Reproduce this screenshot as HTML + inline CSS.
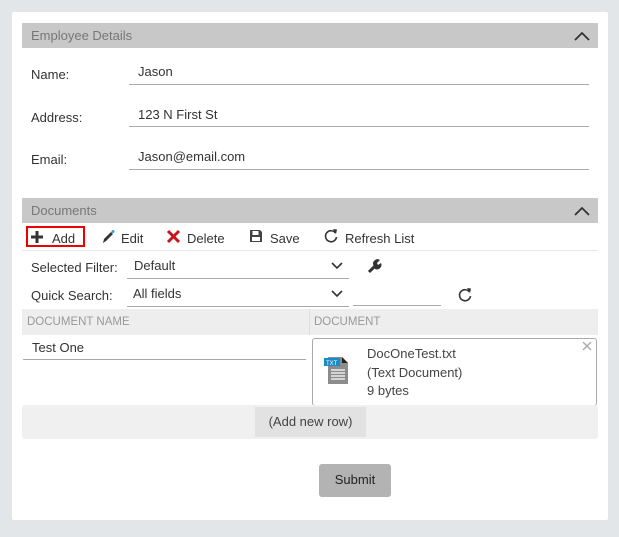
<!DOCTYPE html><html><head><style>
body{margin:0;width:619px;height:537px;background:#e2e6e9;font-family:"Liberation Sans",sans-serif;position:relative;overflow:hidden;color:#333}
.card{position:absolute;left:12px;top:12px;width:596px;height:508px;background:#fff;border-radius:2px}
.a{position:absolute}
.hdr{position:absolute;left:22px;width:576px;height:25px;background:#c8c8c8;color:#777;font-size:13px;line-height:25px;text-indent:9px}
.hdr svg{position:absolute;right:8px;top:8px}
.lbl{font-size:13px;color:#333}
.in{border-bottom:1px solid #aaa;font-size:13px;color:#333}
.t{font-size:13px;color:#333;position:absolute}
</style></head><body><div class="card"></div>
<div class="hdr" style="top:23px">Employee Details<svg width="16" height="10"><path d="M1 9L8 2L15 9" fill="none" stroke="#333" stroke-width="1.8"/></svg></div>
<div class="a lbl" style="left:31px;top:67px">Name:</div>
<div class="a in" style="left:129px;top:64px;width:460px;height:20px;text-indent:9px">Jason</div>
<div class="a lbl" style="left:31px;top:110px">Address:</div>
<div class="a in" style="left:129px;top:107px;width:460px;height:19px;text-indent:9px">123 N First St</div>
<div class="a lbl" style="left:31px;top:152px">Email:</div>
<div class="a in" style="left:129px;top:149px;width:460px;height:20px;text-indent:9px">Jason@email.com</div>
<div class="hdr" style="top:198px">Documents<svg width="16" height="10"><path d="M1 9L8 2L15 9" fill="none" stroke="#333" stroke-width="1.8"/></svg></div>
<div class="a" style="left:22px;top:250px;width:576px;border-top:1px solid #e6e6e6"></div>
<div class="a" style="left:26px;top:226px;width:59px;height:21px;border:2px solid #e00;box-sizing:border-box"></div>
<svg class="a" style="left:30px;top:230px" width="14" height="14"><path d="M7 1V13M1 7H13" stroke="#333" stroke-width="3"/></svg>
<div class="t" style="left:52px;top:231px">Add</div>
<svg class="a" style="left:100px;top:229px" width="16" height="16"><path d="M3 14L4 10L11 3L13 5L6 12Z" fill="#333"/><circle cx="13" cy="2.5" r="1.5" fill="#29a3e0"/></svg>
<div class="t" style="left:121px;top:231px">Edit</div>
<svg class="a" style="left:166px;top:229px" width="15" height="15"><path d="M2 2L13 13M13 2L2 13" stroke="#c8141a" stroke-width="3"/></svg>
<div class="t" style="left:187px;top:231px">Delete</div>
<svg class="a" style="left:249px;top:229px" width="14" height="14"><path d="M1 1H11L13 3V13H1Z" fill="#444"/><rect x="3.5" y="2" width="6" height="4" fill="#fff"/><rect x="3" y="8" width="8" height="4" fill="#fff"/></svg>
<div class="t" style="left:270px;top:231px">Save</div>
<svg class="a" style="left:323px;top:228px" width="16" height="16"><path d="M12.5 5A5.5 5.5 0 1 0 13.5 9" fill="none" stroke="#333" stroke-width="1.6"/><path d="M10 1L14 1.5L13 6Z" fill="#333"/></svg>
<div class="t" style="left:345px;top:231px">Refresh List</div>
<div class="t" style="left:31px;top:260px">Selected Filter:</div>
<div class="a in" style="left:127px;top:258px;width:222px;height:20px;text-indent:7px">Default</div>
<svg class="a" style="left:331px;top:262px" width="12" height="8"><path d="M1 1L6 6L11 1" fill="none" stroke="#333" stroke-width="1.6"/></svg>
<svg class="a" style="left:366px;top:258px" width="16" height="16"><path d="M3 14L9 8" stroke="#333" stroke-width="3"/><path d="M7 6A4.5 4.5 0 0 1 14 2L11 5L12 7L15 5A4.5 4.5 0 0 1 9 11Z" fill="#333"/></svg>
<div class="t" style="left:31px;top:288px">Quick Search:</div>
<div class="a in" style="left:127px;top:286px;width:222px;height:20px;text-indent:6px">All fields</div>
<svg class="a" style="left:331px;top:290px" width="12" height="8"><path d="M1 1L6 6L11 1" fill="none" stroke="#333" stroke-width="1.6"/></svg>
<div class="a" style="left:353px;top:305px;width:88px;border-bottom:1px solid #aaa"></div>
<svg class="a" style="left:457px;top:287px" width="16" height="16"><path d="M12.5 5A5.5 5.5 0 1 0 13.5 9" fill="none" stroke="#333" stroke-width="1.6"/><path d="M10 1L14 1.5L13 6Z" fill="#333"/></svg>
<div class="a" style="left:22px;top:309px;width:576px;height:26px;background:#eee"></div>
<div class="a" style="left:309px;top:309px;height:26px;border-left:1px solid #ddd"></div>
<div class="a" style="left:27px;top:316px;font-size:11.5px;color:#999">DOCUMENT NAME</div>
<div class="a" style="left:314px;top:316px;font-size:11.5px;color:#999">DOCUMENT</div>
<div class="a in" style="left:23px;top:340px;width:283px;height:19px;text-indent:9px">Test One</div>
<div class="a" style="left:312px;top:338px;width:283px;height:66px;border:1px solid #aaa;border-radius:3px"></div>
<svg class="a" style="left:324px;top:356px" width="28" height="30"><path d="M4 1H18L24 7V28H4Z" fill="#8c8c8c"/><path d="M18 1V7H24" fill="#222"/><rect x="0" y="2" width="16" height="8" fill="#1a8ac8"/><text x="2" y="9" font-size="6" fill="#fff" font-family="Liberation Sans">TXT</text><path d="M7 14H21M7 17H21M7 20H21M7 23H21" stroke="#fff" stroke-width="1.3"/></svg>
<div class="t" style="left:367px;top:345px;line-height:18.5px;color:#444">DocOneTest.txt<br>(Text Document)<br>9 bytes</div>
<svg class="a" style="left:582px;top:341px" width="10" height="10"><path d="M1 1L9 9M9 1L1 9" stroke="#aaa" stroke-width="1.4"/></svg>
<div class="a" style="left:22px;top:405px;width:576px;height:34px;background:#f0f0f0;border-radius:3px"></div>
<div class="a" style="left:255px;top:407px;width:111px;height:30px;background:#e2e2e2;font-size:13px;line-height:30px;text-align:center;color:#444">(Add new row)</div>
<div class="a" style="left:319px;top:464px;width:72px;height:33px;background:#b3b3b3;border-radius:3px;font-size:13px;line-height:31px;text-align:center;color:#222">Submit</div>
</body></html>
